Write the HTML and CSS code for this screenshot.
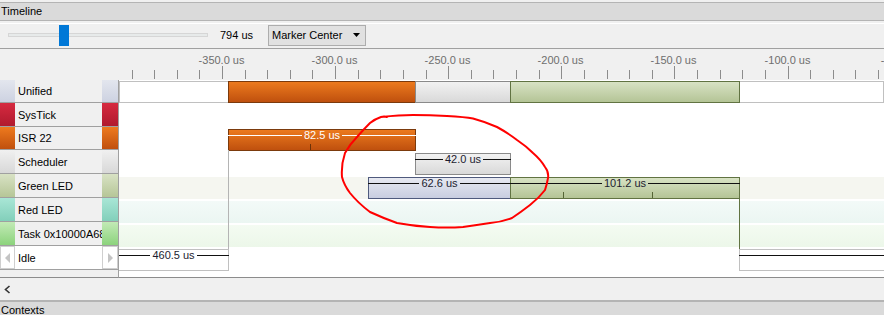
FILE: index.html
```html
<!DOCTYPE html>
<html lang="en">
<head>
    <meta charset="UTF-8">
    <title>Timeline</title>
    <link rel="stylesheet" href="styles.css">
</head>
<body>
    <div class="panel-title timeline-title">Timeline</div>

    <div class="toolbar">
        <div class="slider">
            <div class="slider-track"></div>
            <div class="slider-thumb"></div>
        </div>
        <div class="zoom-value">794 us</div>
        <div class="select">
            <span>Marker Center</span>
            <svg width="7" height="4" viewBox="0 0 7 4"><polygon points="0,0 7,0 3.5,4" fill="#000"/></svg>
        </div>
    </div>

    <div class="chart">
        <div class="corner"></div>
        <div class="ruler"></div>

        <div class="labels">
            <div class="label-row unified h23"><span class="swatch"></span><span class="name">Unified</span><span class="swatch"></span></div>
            <div class="label-row systick"><span class="swatch"></span><span class="name">SysTick</span><span class="swatch"></span></div>
            <div class="label-row isr h23"><span class="swatch"></span><span class="name">ISR 22</span><span class="swatch"></span></div>
            <div class="label-row scheduler"><span class="swatch"></span><span class="name">Scheduler</span><span class="swatch"></span></div>
            <div class="label-row green"><span class="swatch"></span><span class="name">Green LED</span><span class="swatch"></span></div>
            <div class="label-row red"><span class="swatch"></span><span class="name">Red LED</span><span class="swatch"></span></div>
            <div class="label-row task"><span class="swatch"></span><span class="name">Task 0x10000A68</span><span class="swatch"></span></div>
            <div class="label-row idle">
                <span class="arrow-btn"><svg width="5" height="10" viewBox="0 0 5 10"><polygon points="5,0 5,10 0,5" fill="#c4c4c4"/></svg></span>
                <span class="name">Idle</span>
                <span class="arrow-btn"><svg width="5" height="10" viewBox="0 0 5 10"><polygon points="0,0 0,10 5,5" fill="#c4c4c4"/></svg></span>
            </div>
        </div>

        <div class="tracks">
            <div class="track-row first">
                <div class="lane frame">
                    <div class="bar orange" data-start="-347.2" data-dur="82.5"></div>
                    <div class="bar gray" data-start="-264.7" data-dur="42.0"></div>
                    <div class="bar olive" data-start="-222.7" data-dur="101.2"></div>
                </div>
            </div>
            <div class="track-row">
                <div class="lane"></div>
            </div>
            <div class="track-row">
                <div class="lane">
                    <div class="bar orange" data-start="-347.2" data-dur="82.5">
                        <div class="measure light"><span>82.5 us</span></div>
                    </div>
                    <div class="mark brown" data-start="-311.1"></div>
                </div>
            </div>
            <div class="track-row">
                <div class="lane">
                    <div class="bar gray" data-start="-264.7" data-dur="42.0">
                        <div class="measure"><span>42.0 us</span></div>
                    </div>
                </div>
            </div>
            <div class="track-row">
                <div class="lane tint-green">
                    <div class="bar lavender" data-start="-285.3" data-dur="62.6">
                        <div class="measure"><span>62.6 us</span></div>
                    </div>
                    <div class="bar olive" data-start="-222.7" data-dur="101.2">
                        <div class="measure"><span>101.2 us</span></div>
                    </div>
                    <div class="mark dark-olive" data-start="-199.4"></div>
                    <div class="mark dark-olive" data-start="-160.1"></div>
                </div>
            </div>
            <div class="track-row">
                <div class="lane tint-teal"></div>
            </div>
            <div class="track-row">
                <div class="lane tint-lime"></div>
            </div>
            <div class="track-row last">
                <div class="lane">
                    <div class="bar idle-box" data-start="-807.7" data-dur="460.5">
                        <div class="measure"><span>460.5 us</span></div>
                    </div>
                    <div class="bar idle-box" data-start="-121.5" data-dur="600">
                        <div class="measure"></div>
                    </div>
                </div>
            </div>

            <div class="vline isr-drop" data-start="-347.2"></div>
            <div class="vline led-drop" data-start="-121.5"></div>
        </div>
    </div>

    <div class="hscroll">
        <svg width="7" height="9" viewBox="0 0 7 9"><polyline points="5.5,1 1.5,4.5 5.5,8" fill="none" stroke="#333" stroke-width="1.6"/></svg>
    </div>

    <div class="panel-title">Contexts</div>

    <svg class="annotation" width="884" height="315" viewBox="0 0 884 315">
        <path d="M 381 117 Q 400 115 413 115 Q 430 115 447 116 Q 465 117 473 118.5 Q 486 122 497 127 Q 508 133 517 140 Q 526 146 533 153 Q 541 160 545 167 Q 549 172 548 178 Q 547 184 545 190 Q 539 198 530 205 Q 521 212 512 218 Q 502 222 490 223 Q 477 225 463 227 Q 447 228 430 227 Q 413 226 397 223 Q 383 218 370 212 Q 358 203 350 193 Q 344 185 342 177 Q 341 165 345 153 Q 350 144 357 137 Q 364 129 370 123 Q 375 119 381 117 Q 384 116 387 117" fill="none" stroke="#ff0000" stroke-width="2" stroke-linecap="round" stroke-linejoin="round"/>
    </svg>

    <script src="script.js"></script>
</body>
</html>
```

FILE: styles.css
```css
body {
    font-family: 'Liberation Sans', Arial, sans-serif;
    font-size: 11px;
    margin: 0;
    padding: 0;
    width: 884px;
    height: 315px;
    overflow: hidden;
    position: relative;
    background-color: #f0f0f0;
    color: #000;
}

.panel-title {
    height: 17px;
    line-height: 17px;
    padding-left: 1px;
    background-color: #dadada;
    border-top: 1px solid #b4b4b4;
    border-bottom: 1px solid #b4b4b4;
}

.timeline-title {
    margin-top: 2px;
}

.toolbar {
    display: flex;
    align-items: center;
    height: 27px;
    border-bottom: 1px solid #a0a0a0;
    background: linear-gradient(#f0f0f0 0 2px, #fff 2px 3px, #f0f0f0 3px);
}

.slider {
    position: relative;
    align-self: flex-start;
    margin: 4px 0 0 8px;
    width: 200px;
    height: 21px;
}

.slider-track {
    position: absolute;
    left: 0;
    right: 0;
    top: 8px;
    height: 2px;
    background-color: #e7eaea;
    border: 1px solid #d6d6d6;
}

.slider-thumb {
    position: absolute;
    left: 51px;
    top: 0;
    width: 10px;
    height: 21px;
    background-color: #0078d7;
}

.zoom-value {
    width: 48px;
    margin-left: 12px;
}

.select {
    display: flex;
    align-items: center;
    justify-content: space-between;
    box-sizing: border-box;
    width: 98px;
    height: 21px;
    margin-top: 1px;
    padding: 0 5px 0 3px;
    background-color: #e1e1e1;
    border: 1px solid #adadad;
}

.chart {
    display: grid;
    grid-template-columns: 119px 765px;
    grid-template-rows: 31px 198px;
}

.corner,
.ruler {
    background-color: #f0f0f0;
}

.ruler {
    position: relative;
    overflow: hidden;
}

.tick {
    position: absolute;
    bottom: 1px;
    width: 1px;
    height: 9px;
    background-color: #8c8c8c;
}

.tick.major {
    height: 13px;
}

.tick-label {
    position: absolute;
    top: 5px;
    transform: translateX(-51%);
    white-space: nowrap;
    color: #6e6e6e;
}

.labels {
    box-sizing: border-box;
    border-right: 1px solid #a0a0a0;
    border-bottom: 1px solid #8c8c8c;
    background-color: #f0f0f0;
}

.label-row {
    display: flex;
    box-sizing: border-box;
    height: 24px;
    border-bottom: 1px solid #a0a0a0;
}

.label-row.h23 {
    height: 23px;
}

.label-row .swatch {
    width: 15px;
    flex-shrink: 0;
}

.label-row .swatch:last-child {
    width: 16px;
}

.label-row .name {
    flex: 1;
    padding-left: 3px;
    overflow: hidden;
    white-space: nowrap;
    display: flex;
    align-items: center;
}

.unified .swatch { background: linear-gradient(#e3e6ee, #cdd2e1); }
.systick .swatch { background: linear-gradient(#d62a40, #b01a2e); }
.isr .swatch { background: linear-gradient(#ee7a1e, #c0500e); }
.scheduler .swatch { background: linear-gradient(#f0f0f0, #d8d8d8); }
.green .swatch { background: linear-gradient(#d8e2c4, #b6c697); }
.red .swatch { background: linear-gradient(#a9e6d6, #82cfba); }
.task .swatch { background: linear-gradient(#c2eab6, #8cd37c); }

.label-row.idle {
    background-color: #fff;
}

.arrow-btn {
    display: flex;
    align-items: center;
    justify-content: center;
    box-sizing: border-box;
    width: 15px;
    flex-shrink: 0;
    border: 1px solid #cfcfcf;
    background-color: #fff;
}

.arrow-btn:last-child {
    width: 16px;
}

.tracks {
    position: relative;
    overflow: hidden;
    background-color: #fff;
    border-bottom: 1px solid #8c8c8c;
}

.track-row {
    box-sizing: border-box;
    height: 24px;
    padding-top: 2px;
}

.track-row.first {
    height: 23px;
    padding-top: 1px;
}

.track-row.last {
    height: 23px;
}

.lane {
    position: relative;
    height: 22px;
}

.lane.frame {
    box-shadow: inset 0 0 0 1px #c0c0c0;
}

.tint-green { background-color: #f5f6f0; }
.tint-teal { background: linear-gradient(#f3faf8, #ebf6f2); }
.tint-lime { background: linear-gradient(#f4fbf2, #ecf7e9); }

.bar {
    position: absolute;
    top: 0;
    height: 22px;
    box-sizing: border-box;
    border: 1px solid;
}

.bar.orange {
    background: linear-gradient(#ec7a1e, #bf500e);
    border-color: #7b3a0c;
}

.bar.gray {
    background: linear-gradient(#f2f2f2, #d9d9d9);
    border-color: #8a8a8a;
}

.bar.olive {
    background: linear-gradient(#d8e2c4, #b4c496);
    border-color: #617342;
}

.bar.lavender {
    background: linear-gradient(#e7e9f1, #c8cde0);
    border-color: #4f5a7d;
}

.bar.idle-box {
    background-color: #fff;
    border-color: #c0c0c0;
}

.bar.clipped {
    border-left: 0;
}

.measure {
    position: absolute;
    left: -1px;
    right: -1px;
    top: 5px;
    height: 1px;
    display: flex;
    align-items: center;
    color: #1c1c30;
}

.measure::before,
.measure::after {
    content: '';
    flex: 1;
    height: 1px;
    background-color: #111;
}

.measure span {
    padding: 0 2px;
    line-height: 13px;
    white-space: nowrap;
}

.measure.light {
    color: #fff;
}

.measure.light::before,
.measure.light::after {
    background-color: #fff;
}

.mark {
    position: absolute;
    bottom: 1px;
    width: 1px;
    height: 6px;
}

.mark.brown { background-color: #6b3208; }
.mark.dark-olive { background-color: #556536; }

.vline {
    position: absolute;
    width: 1px;
}

.vline.isr-drop {
    top: 70px;
    height: 99px;
    background-color: #b4b4b4;
}

.vline.led-drop {
    top: 118px;
    height: 51px;
    background-color: #617342;
}

.hscroll {
    display: flex;
    align-items: center;
    height: 22px;
    padding-left: 4px;
    border-bottom: 1px solid #b4b4b4;
}

.annotation {
    position: absolute;
    left: 0;
    top: 0;
    pointer-events: none;
}
```

FILE: script.js
```js
// time axis: -350 us sits 103px into the track area, 2.262 px per us
const X0 = 103;
const K = 2.262;
const toX = t => X0 + (t + 350) * K;

const ruler = document.querySelector('.ruler');
for (let t = -390; t <= -40; t += 10) {
    const left = Math.round(toX(t));
    const major = t % 50 === 0;
    const tick = document.createElement('div');
    tick.className = major ? 'tick major' : 'tick';
    tick.style.left = left + 'px';
    ruler.appendChild(tick);

    if (major) {
        const label = document.createElement('div');
        label.className = 'tick-label';
        label.textContent = t.toFixed(1) + ' us';
        label.style.left = left + 'px';
        ruler.appendChild(label);
    }
}

document.querySelectorAll('[data-start]').forEach(el => {
    const start = parseFloat(el.dataset.start);
    let left = Math.round(toX(start));

    if (el.dataset.dur) {
        const right = Math.round(toX(start + parseFloat(el.dataset.dur)));
        let width = right - left + 1;
        if (left < 0) {
            width += left;
            left = 0;
            el.classList.add('clipped');
        }
        el.style.width = width + 'px';
    }
    el.style.left = left + 'px';
});
```
